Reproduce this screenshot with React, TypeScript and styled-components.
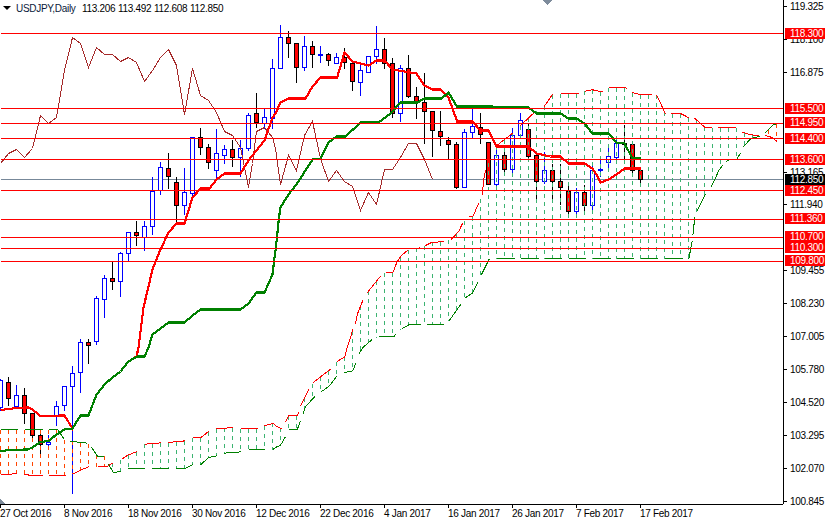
import React from "react";
import styled, { createGlobalStyle } from "styled-components";

const GlobalStyle = createGlobalStyle`
  html, body { margin: 0; padding: 0; background: #fff; }
`;

const Window = styled.div`
  width: 825px;
  height: 521px;
  display: grid;
  grid-template-columns: 783px 42px;
  grid-template-rows: 504px 17px;
  overflow: hidden;
  background: #fff;
  font-family: "Liberation Sans", Arial, sans-serif;
  font-size: 10px;
  letter-spacing: -0.3px;
  color: #000;
`;

const Plot = styled.div`
  position: relative;
  overflow: hidden;
`;

const ChartSvg = styled.svg`
  display: block;
`;

const Legend = styled.div`
  position: absolute;
  top: 2px;
  left: 3px;
  display: flex;
  align-items: center;
  height: 12px;
  white-space: nowrap;
`;

const MenuCaret = styled.span`
  width: 0;
  height: 0;
  border-left: 4px solid transparent;
  border-right: 4px solid transparent;
  border-top: 4px solid #000;
  margin-right: 5px;
`;

const Symbol = styled.span`
  width: 66px;
  color: #0a1a3a;
`;

const Quotes = styled.span`
  word-spacing: 0.2px;
`;

const PriceAxis = styled.div`
  position: relative;
  border-left: 1px solid #000;
  grid-row: 1;
  grid-column: 2;
`;

const PriceTick = styled.div`
  position: absolute;
  left: 0;
  height: 11px;
  display: flex;
  align-items: center;
  white-space: nowrap;
  &::before {
    content: "";
    width: 3px;
    height: 1px;
    background: #000;
    margin-right: 3px;
  }
`;

const PriceTag = styled.div<{ $bg: string }>`
  position: absolute;
  left: 1px;
  right: 0;
  height: 11px;
  padding-left: 5px;
  line-height: 11px;
  background: ${(p) => p.$bg};
  color: #fff;
`;

const TimeAxis = styled.div`
  position: relative;
  border-top: 1px solid #000;
  grid-row: 2;
  grid-column: 1;
`;

const TimeTick = styled.div`
  position: absolute;
  top: 0;
  height: 16px;
  white-space: nowrap;
  padding-top: 3px;
  line-height: 12px;
  &::before {
    content: "";
    position: absolute;
    left: 0;
    top: 0;
    width: 1px;
    height: 3px;
    background: #000;
  }
`;

const ShiftMark = styled.polygon`
  fill: #7d8b9b;
`;

type Pt = [number, number];

// [wick top, body top, body bottom, wick bottom, bullish]; one candle per 8px
const candles: [number, number, number, number, number][] = [
  [378, 380, 407, 410, 1], [376, 382, 398, 405, 0], [384, 395, 406, 407, 1], [387, 395, 413, 423, 0],
  [413, 413, 435, 440, 0], [432, 435, 444, 453, 0], [434, 442, 444, 446, 1], [400, 406, 415, 425, 1],
  [385, 386, 405, 410, 1], [365, 373, 386, 493, 1], [338, 342, 372, 392, 1], [338, 342, 345, 363, 0],
  [295, 298, 341, 344, 1], [274, 278, 299, 317, 1], [261, 278, 281, 289, 0], [251, 253, 281, 296, 1],
  [231, 232, 253, 261, 1], [220, 232, 235, 245, 0], [220, 226, 237, 250, 1], [176, 191, 226, 234, 1],
  [161, 167, 190, 194, 1], [152, 168, 176, 188, 0], [176, 182, 205, 221, 0], [167, 192, 205, 214, 1],
  [136, 137, 193, 197, 1], [127, 137, 147, 154, 0], [143, 147, 162, 168, 0], [128, 153, 170, 179, 1],
  [144, 149, 155, 163, 1], [139, 149, 157, 166, 0], [139, 148, 157, 176, 1], [112, 115, 148, 150, 1],
  [92, 113, 122, 127, 0], [108, 117, 123, 128, 1], [58, 68, 118, 128, 1], [24, 37, 68, 68, 1],
  [30, 37, 43, 57, 0], [43, 43, 67, 82, 0], [35, 46, 67, 70, 1], [40, 46, 54, 67, 0],
  [45, 54, 54, 62, 1], [52, 54, 60, 65, 0], [52, 57, 63, 63, 1], [47, 57, 62, 68, 0],
  [62, 63, 81, 90, 0], [63, 70, 82, 95, 1], [55, 56, 72, 72, 1], [25, 49, 56, 63, 1],
  [37, 49, 63, 68, 0], [57, 63, 113, 117, 0], [64, 68, 113, 121, 1], [54, 68, 96, 97, 0],
  [86, 96, 101, 118, 0], [72, 102, 111, 143, 0], [111, 111, 130, 156, 0], [110, 131, 136, 145, 0],
  [136, 140, 144, 158, 0], [141, 144, 187, 188, 0], [128, 132, 187, 187, 1], [107, 126, 132, 138, 1],
  [112, 127, 134, 143, 0], [142, 142, 184, 184, 0], [147, 155, 184, 186, 1], [147, 155, 169, 174, 0],
  [127, 135, 169, 172, 1], [112, 120, 135, 138, 1], [123, 129, 156, 159, 0], [153, 155, 181, 200, 0],
  [151, 170, 181, 183, 1], [163, 170, 181, 202, 0], [163, 181, 187, 204, 0], [182, 191, 211, 214, 0],
  [187, 192, 211, 214, 1], [184, 192, 205, 211, 0], [165, 170, 205, 209, 1], [155, 169, 169, 176, 1],
  [143, 156, 162, 167, 1], [138, 143, 157, 162, 1], [124, 143, 144, 160, 0], [142, 144, 170, 172, 0],
  [168, 170, 179, 184, 0],
];

const tenkan: Pt[] = [
  [0, 409.5], [8, 408.5], [16, 407.5], [28, 407], [32, 409], [40, 415.5], [64, 415], [72, 428], [80, 415], [88, 415],
  [96, 394], [105, 383], [112, 377], [120, 371], [128, 361], [136, 356], [138, 347], [140, 331], [143, 307], [148, 286],
  [152, 269], [160, 249], [168, 232], [176, 223], [184, 223], [192, 197], [200, 188], [209, 188], [216, 179], [224, 173],
  [240, 173], [248, 160], [264, 140], [272, 117], [275, 113], [280, 102], [288, 98], [305, 98], [312, 86], [320, 77],
  [336.7, 77], [344, 52], [352, 61], [368, 65], [376, 60], [384, 60], [392, 69], [416, 73], [424, 85], [432, 89],
  [440, 89], [448, 97], [456.7, 121], [472, 121], [480, 130], [488, 130], [496, 146], [528, 146], [536, 153], [550, 156],
  [560, 156], [568, 163], [584, 163], [592, 168], [596, 174], [600, 182], [608, 179], [616, 174], [624, 168], [640, 168],
];

const kijun: Pt[] = [
  [0, 451], [8, 449.5], [27, 449], [32, 447], [40, 441.5], [48, 440.5], [56, 434], [64, 429], [72, 428], [80, 415],
  [88, 415], [96, 394], [105, 383], [112, 377], [120, 371], [128, 361], [136.5, 356], [144, 356], [148, 347], [152, 334],
  [160, 328], [168, 322], [184, 322], [192, 315], [200, 309], [240, 309], [248, 303], [256, 292], [264, 292], [272, 274],
  [274, 257], [275, 250], [277, 232], [278.5, 217], [280, 207], [288, 194], [296, 184], [303, 173], [312, 159], [320, 158],
  [328, 142], [336, 136], [345, 136], [360, 122], [378, 122], [390, 113], [400, 102], [417, 102], [424, 98], [441, 98],
  [448, 92], [456.5, 106], [488, 106], [528, 107], [536, 113], [560, 113], [568, 118], [576, 118], [584, 123], [592, 133],
  [608, 133], [616, 142], [624, 143], [632, 158], [640, 158],
];

const chikou: Pt[] = [
  [0, 163], [8, 153], [16, 149], [24, 157], [32, 148], [40, 115], [48, 123], [56, 117], [64, 70], [72, 37],
  [80, 43], [88, 67], [96, 47], [104, 54], [112, 54], [120, 61], [128, 57], [136, 62], [144, 81], [152, 70],
  [160, 57], [168, 49], [176, 65], [184, 114], [192, 68], [200, 95], [208, 100], [216, 112], [224, 131], [232, 135],
  [240, 147], [248, 187], [252, 163], [256, 131], [264, 127], [272, 137], [275, 148], [280, 184], [288, 155], [296, 170],
  [304, 135], [312, 121], [320, 158], [328, 181], [336, 170], [344, 181], [352, 186], [360, 210], [368, 192], [376, 204],
  [384, 169], [392, 169], [400, 157], [408, 143], [416, 143], [424, 159], [432, 179],
];

const spanRed: Pt[][] = [
  [[0, 473.7], [9, 473.7], [17, 473]], [[24, 473.7], [32, 475.3], [42, 475.3]], [[48, 475.3], [65, 475.3]],
  [[72, 473.7], [80, 469.7], [89, 466]], [[97, 466.3], [106, 466.3], [113, 462]], [[121, 458.7], [128, 454.3], [137, 451]],
  [[144, 443.7], [160.7, 442.3]], [[168, 442], [185, 440.3]], [[192, 437.3], [200, 437.3], [209, 430.3]],
  [[216, 428.3], [233, 427]], [[240, 428.3], [257, 428.3]], [[264, 425.3], [273, 422.7], [275, 425.3], [282, 428.7]],
  [[285, 421.3], [288, 415.3], [297, 415.3], [298, 412]], [[300, 405.3], [308.3, 388.7]], [[312.7, 382], [330, 368.7]],
  [[336.7, 361], [344.3, 356.3], [346.7, 347], [350, 337], [352.3, 329]], [[355, 324], [356.7, 314], [362.3, 300]],
  [[366.7, 292.3], [380, 275.7]], [[385, 272.3], [392.3, 272.3], [396.7, 261], [401, 255], [408, 249]],
  [[418, 247.3], [419, 247.3]], [[425, 245], [431.7, 241.7], [443.3, 241.3]], [[450.7, 239], [458.3, 230.7], [462.3, 222.3]],
  [[468.3, 216.3], [472.3, 216.3], [478.3, 202.3]], [[481.7, 194], [483.3, 179], [485, 170]], [[495, 146], [513, 132]],
  [[520, 125], [536, 110]], [[543, 107], [552, 94], [553, 95]], [[560, 93.3], [578, 93.3]], [[584, 90.7], [592, 89.3], [603, 91.7]],
  [[608, 87.3], [625, 87.3], [627, 89]], [[632, 92], [640, 94.3], [651, 94.3]], [[656, 94.3], [665, 113.3]],
  [[670.7, 113.3], [680.7, 113.3], [688.3, 117.3]], [[694, 117.7], [705, 127.3], [711, 127.3]], [[717, 127.3], [735, 127.3]],
  [[741.7, 131.7], [750, 134.3], [758.3, 135]], [[765, 135], [771.7, 137], [776.7, 141]],
];

const spanGreen: Pt[][] = [
  [[0, 429], [17, 429]], [[24, 429], [42, 429]], [[48, 429], [57, 429], [64, 439]], [[69, 440.5], [80, 442], [87, 442.7]],
  [[91, 447], [97, 455.6], [104, 455.7]], [[108, 464], [113, 472], [121, 471]], [[127.7, 468], [144.3, 468]], [[151.7, 468], [168.3, 468]],
  [[175.7, 468], [184.3, 468], [192.3, 464.3]], [[200, 464.3], [208.3, 457], [216.7, 455.3]], [[223.3, 452.7], [240.7, 451.3]],
  [[248.3, 449.3], [264.3, 449.3]], [[272.3, 449], [275, 447], [280, 444.7], [285, 436.3]], [[288.3, 429.3], [296.7, 429.3], [300, 420.3]],
  [[302.7, 413], [305, 406.3], [314.3, 396]], [[320.7, 391.3], [328.3, 386], [336.7, 375.3]], [[344, 372], [352.3, 370.3], [355.7, 362]],
  [[358.3, 353.7], [362.3, 347], [371.7, 339]], [[378.3, 336.3], [393.3, 336.3], [395.7, 333.3]], [[401.7, 328], [408.3, 324.3], [420, 324.3]],
  [[426, 324.3], [441.7, 324.3], [443.3, 323.5]], [[448.3, 320.7], [460.7, 303.3]], [[465, 297.3], [472.3, 292.3], [477.7, 281.3]],
  [[480.7, 274.7], [488.7, 258.7]], [[496, 258.3], [514, 258.3]], [[520, 258.3], [538.3, 258.3]], [[544.3, 258.3], [561.7, 258.3]],
  [[568, 258.3], [585.7, 258.3]], [[592, 258.3], [610, 258.3]], [[616, 258.3], [633.7, 258.3]], [[640, 258.3], [657.7, 258.3]],
  [[664, 258.3], [682, 258.3]], [[688.3, 258.3], [691.7, 240.7]], [[692.3, 235], [694.3, 216.7]], [[696.7, 210], [705, 193.3]],
  [[710.7, 186.7], [718.3, 170], [722, 165]], [[726, 161], [729, 159]], [[736.7, 158], [740, 152.7]],
  [[742.7, 146.7], [750, 138.3], [759.3, 135.7]], [[765, 132.3], [771.7, 125], [776.7, 122.7]],
];

const levels = [33, 108, 123, 138, 159, 190, 219, 237, 248, 261];

const priceTicks: [string, number][] = [
  ["119.325", 6], ["118.100", 39], ["116.875", 72], ["113.165", 172], ["111.940", 204], ["109.455", 270],
  ["108.230", 303], ["107.005", 336], ["105.780", 369], ["104.520", 402], ["103.295", 435], ["102.070", 468], ["100.845", 501],
];

const priceTags: [string, number, string][] = [
  ["118.300", 33, "#ff0000"], ["115.500", 108, "#ff0000"], ["114.950", 122, "#ff0000"], ["114.400", 138, "#ff0000"],
  ["113.600", 159, "#ff0000"], ["112.850", 179, "#000000"], ["112.450", 190, "#ff0000"], ["111.360", 218, "#ff0000"],
  ["110.700", 236, "#ff0000"], ["110.300", 247, "#ff0000"], ["109.800", 260, "#ff0000"],
];

const timeTicks: [string, number][] = [
  ["27 Oct 2016", 0], ["8 Nov 2016", 64], ["18 Nov 2016", 128], ["30 Nov 2016", 192], ["12 Dec 2016", 256],
  ["22 Dec 2016", 320], ["4 Jan 2017", 384], ["16 Jan 2017", 448], ["26 Jan 2017", 512], ["7 Feb 2017", 576], ["17 Feb 2017", 640],
];

const interp = (segs: Pt[][], x: number): number => {
  const pts = segs.flat();
  for (let i = 0; i < pts.length - 1; i++) {
    const [x0, y0] = pts[i];
    const [x1, y1] = pts[i + 1];
    if (x >= x0 && x <= x1) return x1 === x0 ? y0 : y0 + ((y1 - y0) * (x - x0)) / (x1 - x0);
  }
  return pts[pts.length - 1][1];
};

const toPoints = (pts: Pt[]) => pts.map((p) => p.join(",")).join(" ");

const Hatches = () => (
  <g strokeWidth={1} strokeDasharray="4 4">
    {Array.from({ length: 98 }, (_, n) => {
      const x = n * 8;
      const red = interp(spanRed, x);
      const green = interp(spanGreen, x);
      return (
        <line
          key={n}
          x1={x}
          x2={x}
          y1={Math.min(red, green)}
          y2={Math.max(red, green)}
          stroke={red < green ? "#3cb371" : "#ff4500"}
        />
      );
    })}
  </g>
);

const Candles = () => (
  <g strokeWidth={1}>
    {candles.map(([wt, bt, bb, wb, bull], n) => {
      const x = n * 8;
      const colour = bull ? "#0000ff" : "#000000";
      return (
        <g key={n} stroke={colour}>
          <line x1={x} x2={x} y1={wt} y2={wb} />
          <rect x={x - 2} y={bt} width={4} height={Math.max(bb - bt, 1)} fill={bull ? "#ffffff" : "#ff0000"} />
        </g>
      );
    })}
  </g>
);

const Chart = () => (
  <ChartSvg width={783} height={504} shapeRendering="crispEdges">
    <g transform="translate(0.5 0.5)">
      <line x1={0} x2={783} y1={179} y2={179} stroke="#778899" />
      <Candles />
      <Hatches />
      <polyline points={toPoints(chikou)} fill="none" stroke="#a52a2a" />
      {spanRed.map((s, i) => (
        <polyline key={i} points={toPoints(s)} fill="none" stroke="#ff0000" />
      ))}
      {spanGreen.map((s, i) => (
        <polyline key={i} points={toPoints(s)} fill="none" stroke="#008000" />
      ))}
      <polyline points={toPoints(tenkan)} fill="none" stroke="#ff0000" strokeWidth={2.2} />
      <polyline points={toPoints(kijun)} fill="none" stroke="#008000" strokeWidth={2.2} />
      {levels.map((y) => (
        <line key={y} x1={0} x2={783} y1={y} y2={y} stroke="#ff0000" />
      ))}
    </g>
    <ShiftMark points="542,0 552,0 547,5" />
    <ShiftMark points="0,499 5,504 0,504" />
  </ChartSvg>
);

export default function App() {
  return (
    <>
      <GlobalStyle />
      <Window>
        <Plot>
          <Chart />
          <Legend>
            <MenuCaret />
            <Symbol>USDJPY,Daily</Symbol>
            <Quotes>113.206 113.492 112.608 112.850</Quotes>
          </Legend>
        </Plot>
        <PriceAxis>
          {priceTicks.map(([label, y]) => (
            <PriceTick key={label} style={{ top: y - 5 }}>
              {label}
            </PriceTick>
          ))}
          {priceTags.map(([label, y, bg]) => (
            <PriceTag key={label} $bg={bg} style={{ top: y - 5 }}>
              {label}
            </PriceTag>
          ))}
        </PriceAxis>
        <TimeAxis>
          {timeTicks.map(([label, x]) => (
            <TimeTick key={label} style={{ left: x }}>
              {label}
            </TimeTick>
          ))}
        </TimeAxis>
      </Window>
    </>
  );
}
